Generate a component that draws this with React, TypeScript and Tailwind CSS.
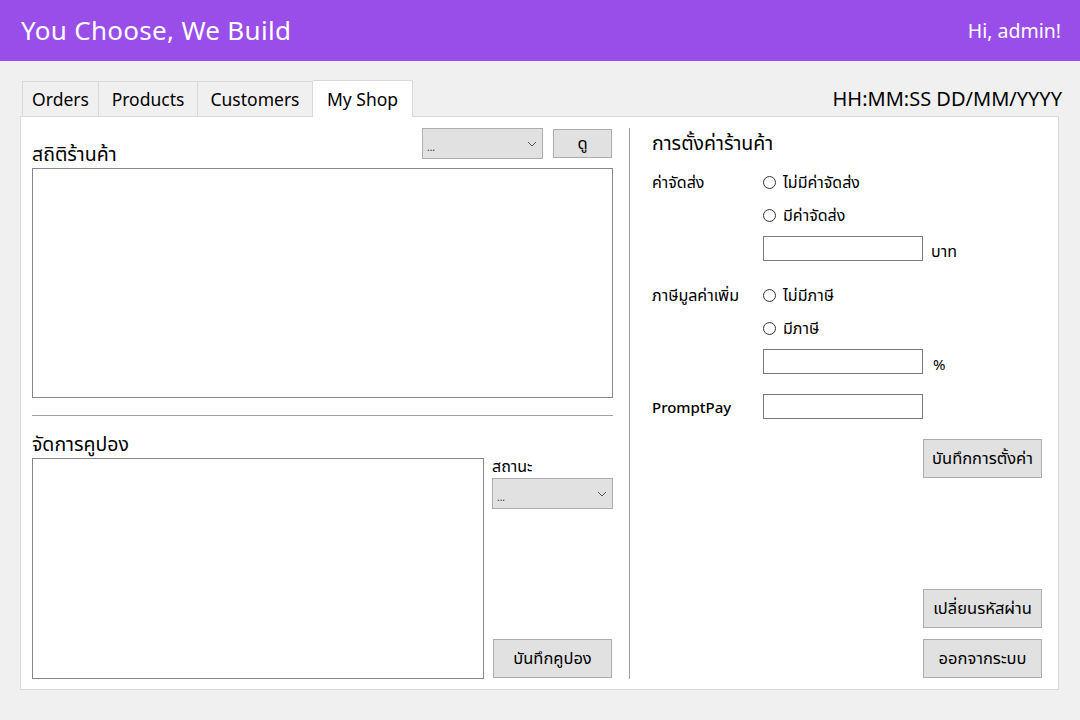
import React from "react";

const font = { fontFamily: '"Noto Sans", "Noto Sans Thai", "Open Sans", sans-serif' };

function Select({ className = "" }: { className?: string }) {
  return (
    <div className={`flex items-center justify-between border border-[#adadad] bg-[#e1e1e1] px-[4px] ${className}`}>
      <span className="text-[10px] leading-none text-[#333] mt-[6px]">...</span>
      <svg width="10" height="6" viewBox="0 0 10 6" className="mr-[1px]">
        <path d="M1 1 L5 5 L9 1" fill="none" stroke="#555" strokeWidth="1" />
      </svg>
    </div>
  );
}

function Btn({ children, className = "" }: { children: React.ReactNode; className?: string }) {
  return (
    <div className={`flex items-center justify-center border border-[#adadad] bg-[#e1e1e1] text-[16.5px] text-black ${className}`}>
      {children}
    </div>
  );
}

function Radio({ label }: { label: string }) {
  return (
    <div className="flex items-center gap-[7px] h-[20px] text-[16px] leading-[20px] text-black">
      <span className="inline-block w-[13px] h-[13px] rounded-full border border-[#333] bg-white" />
      <span>{label}</span>
    </div>
  );
}

export default function App() {
  return (
    <div className="w-[1080px] h-[720px] bg-[#f0f0f0] overflow-hidden" style={font}>
      <header className="h-[61px] bg-[#994eea] flex items-center justify-between pl-[21px] pr-[19px]">
        <div className="text-white text-[26px] tracking-[0.3px]">You Choose, We Build</div>
        <div className="text-white text-[19.5px]">Hi, admin!</div>
      </header>

      <div className="px-[20px] pt-[19px]">
        <div className="flex items-end justify-between h-[36px]">
          <div className="flex items-end ml-[2px]">
            <div className="w-[77px] h-[35px] flex items-center justify-center border border-[#d9d9d9] border-b-0 bg-[#f0f0f0] text-[17.5px] text-black">Orders</div>
            <div className="w-[99px] h-[35px] flex items-center justify-center border border-[#d9d9d9] border-l-0 border-b-0 bg-[#f0f0f0] text-[17.5px] text-black">Products</div>
            <div className="w-[115px] h-[35px] flex items-center justify-center border border-[#d9d9d9] border-l-0 border-b-0 bg-[#f0f0f0] text-[17.5px] text-black">Customers</div>
            <div className="w-[100px] h-[37px] flex items-center justify-center border border-[#d9d9d9] border-l-0 border-b-0 bg-white text-[17.5px] text-black relative top-[1px] z-10">My Shop</div>
          </div>
          <div className="text-[20px] text-black self-center mt-[2px] mr-[-2px]">HH:MM:SS DD/MM/YYYY</div>
        </div>

        <div className="w-[1039px] h-[574px] bg-white border border-[#d9d9d9] flex pl-[11px] pt-[11px] pb-[10px]">
          {/* Left column */}
          <div className="w-[581px] flex flex-col">
            <div className="flex items-start h-[40px]">
              <div className="text-[19.5px] text-black mt-[11px]">สถิติร้านค้า</div>
              <div className="flex-1" />
              <Select className="w-[121px] h-[31px]" />
              <Btn className="w-[59px] h-[29px] ml-[10px] mr-[1px] mt-[1px]">ดู</Btn>
            </div>
            <div className="h-[231px] border border-[#828790] bg-white" />
            <div className="h-[1px] bg-[#a0a0a0] mt-[17px]" />
            <div className="text-[19.5px] text-black mt-[14px] leading-[28px]">จัดการคูปอง</div>
            <div className="flex flex-1">
              <div className="w-[452px] h-[221px] border border-[#828790] bg-white" />
              <div className="flex flex-col ml-[8px] w-[121px]">
                <div className="text-[16px] text-black leading-[20px] mt-[-2px]">สถานะ</div>
                <Select className="w-[121px] h-[31px] mt-[2px]" />
                <div className="flex-1" />
                <Btn className="w-[119px] h-[39px] ml-[1px] mb-[1px]">บันทึกคูปอง</Btn>
              </div>
            </div>
          </div>

          {/* Separator */}
          <div className="w-[1px] bg-[#a0a0a0] ml-[16px] mr-[22px] h-[551px]" />

          {/* Right column */}
          <div className="w-[390px] flex flex-col">
            <div className="text-[19.5px] text-black leading-[28px] mt-[1px]">การตั้งค่าร้านค้า</div>
            <div className="flex mt-[15px]">
              <div className="w-[111px] text-[16px] text-black leading-[20px]">ค่าจัดส่ง</div>
              <div className="flex flex-col">
                <Radio label="ไม่มีค่าจัดส่ง" />
                <div className="mt-[13px]"><Radio label="มีค่าจัดส่ง" /></div>
                <div className="flex items-center mt-[11px] h-[25px]">
                  <div className="w-[160px] h-[25px] border border-[#7a7a7a] bg-white" />
                  <span className="ml-[8px] text-[16px] leading-[20px] text-black mt-[5px]">บาท</span>
                </div>
              </div>
            </div>
            <div className="flex mt-[24px]">
              <div className="w-[111px] text-[16px] text-black leading-[20px]">ภาษีมูลค่าเพิ่ม</div>
              <div className="flex flex-col">
                <Radio label="ไม่มีภาษี" />
                <div className="mt-[13px]"><Radio label="มีภาษี" /></div>
                <div className="flex items-center mt-[11px] h-[25px]">
                  <div className="w-[160px] h-[25px] border border-[#7a7a7a] bg-white" />
                  <span className="ml-[10px] text-[15px] leading-[20px] text-black mt-[5px]">%</span>
                </div>
              </div>
            </div>
            <div className="flex items-center mt-[20px] h-[25px]">
              <div className="w-[111px] text-[15px] leading-[20px] text-black font-medium">PromptPay</div>
              <div className="w-[160px] h-[25px] border border-[#7a7a7a] bg-white" />
            </div>
            <div className="flex justify-end mt-[20px]">
              <Btn className="w-[119px] h-[39px]">บันทึกการตั้งค่า</Btn>
            </div>
            <div className="flex-1" />
            <div className="flex justify-end">
              <Btn className="w-[119px] h-[39px]">เปลี่ยนรหัสผ่าน</Btn>
            </div>
            <div className="flex justify-end mt-[11px] mb-[1px]">
              <Btn className="w-[119px] h-[39px]">ออกจากระบบ</Btn>
            </div>
          </div>
        </div>
      </div>
    </div>
  );
}
